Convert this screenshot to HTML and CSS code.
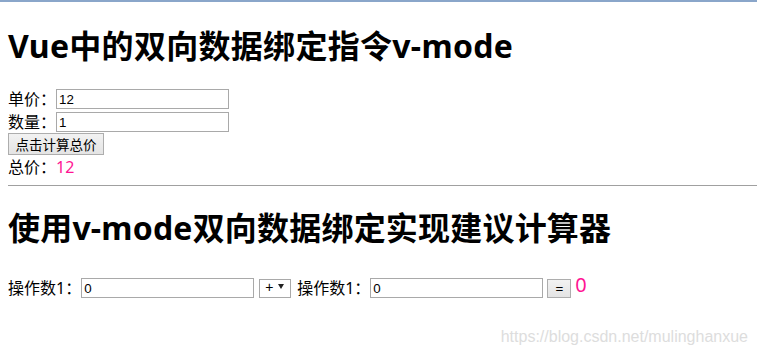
FILE: index.html
```html
<!DOCTYPE html>
<html lang="zh-CN">
<head>
<meta charset="utf-8">
<title>Vue中的双向数据绑定指令v-mode</title>
<link rel="stylesheet" href="styles.css">
</head>
<body>
<div id="app">
  <h1 class="title">Vue中的双向数据绑定指令v-mode</h1>
  <div class="form">
    <div class="row row-first"><span class="label">单价：</span><input class="field" type="text" value="12"></div>
    <div class="row row-second"><span class="label">数量：</span><input class="field" type="text" value="1"></div>
    <button class="btn btn-calc" type="button">点击计算总价</button>
    <div class="total"><span class="label">总价：</span><span class="result">12</span></div>
  </div>
  <hr class="divider">
  <h2 class="title title-second">使用v-mode双向数据绑定实现建议计算器</h2>
  <div class="calc">
    <span class="label">操作数1：</span>
    <input class="field" type="text" value="0">
    <span class="sel-wrap">
      <select class="op"><option>+</option><option>-</option><option>*</option><option>/</option></select>
      <svg class="caret" width="6" height="5" viewBox="0 0 6 5"><path d="M0 0H6L3 5Z" fill="#222"/></svg>
    </span>
    <span class="label label-second">操作数1：</span>
    <input class="field" type="text" value="0">
    <button class="btn btn-eq" type="button">=</button>
    <span class="result result-big">0</span>
  </div>
</div>
<div class="watermark">https://blog.csdn.net/mulinghanxue</div>
</body>
</html>
```

FILE: styles.css
```css
html, body {
  background: #fff;
}
body {
  margin: 0;
  padding: 0 0 0 8px;
  border-top: 2px solid #8aa6ca;
  font-family: "Noto Sans", "Noto Sans CJK SC", sans-serif;
  font-size: 16px;
  color: #000;
  min-height: 354px;
  box-sizing: border-box;
}
.title {
  font-size: 32px;
  font-weight: bold;
  line-height: 40px;
  margin: 24px 0 23px;
  white-space: nowrap;
  letter-spacing: 0.3px;
}
.title-second {
  margin: 22px 0 30px;
  letter-spacing: 0.2px;
}
.form {
  display: flex;
  flex-direction: column;
  align-items: flex-start;
}
.row {
  display: flex;
  align-items: center;
  height: 20px;
}
.row-first { margin-bottom: 3px; }
.row-second { margin-bottom: 1px; }
.label {
  line-height: 20px;
  white-space: nowrap;
}
.field {
  box-sizing: border-box;
  width: 173px;
  height: 20px;
  margin: 0;
  padding: 0 2px;
  border: 1px solid #a9a9a9;
  font-family: "Liberation Sans", Arial, sans-serif;
  font-size: 13.33px;
  color: #000;
  background: #fff;
  outline: none;
}
.btn {
  box-sizing: border-box;
  margin: 0;
  border: 1px solid #adadad;
  border-radius: 0;
  background: linear-gradient(#f2f2f2, #e4e4e4);
  color: #000;
  font-family: "Noto Sans CJK SC", sans-serif;
  font-size: 13.5px;
  line-height: 18px;
  cursor: pointer;
}
.btn-calc {
  height: 22px;
  width: 96px;
  padding: 0;
}
.total {
  line-height: 24px;
  height: 24px;
  display: flex;
  align-items: center;
}
.result {
  color: #ff1493;
  font-size: 16px;
}
.divider {
  margin: 6px 0 0;
  border: 0;
  border-top: 1px solid #a0a0a0;
  height: 0;
}
.calc {
  display: flex;
  align-items: flex-start;
  height: 20px;
}
.calc .label {
  line-height: 20px;
}
.sel-wrap {
  position: relative;
  display: block;
  margin: 1px 0 0 5px;
  height: 19px;
}
.op {
  appearance: none;
  -webkit-appearance: none;
  box-sizing: border-box;
  display: block;
  width: 32px;
  height: 19px;
  margin: 0;
  padding: 0 0 2px 5px;
  border: 1px solid #a9a9a9;
  border-radius: 0;
  background: #fff;
  font-family: "Liberation Sans", Arial, sans-serif;
  font-size: 14px;
  line-height: 15px;
  color: #000;
}
.caret {
  position: absolute;
  left: 19px;
  top: 5px;
}
.label-second {
  margin-left: 6px;
}
.btn-eq {
  margin: 1px 0 0 4px;
  width: 24px;
  height: 19px;
  padding: 0;
  font-family: "Liberation Sans", Arial, sans-serif;
  font-size: 13.33px;
  line-height: 17px;
}
.result-big {
  margin-left: 4px;
  font-size: 20px;
  line-height: 20px;
  margin-top: -3px;
}
.watermark {
  position: absolute;
  right: 9px;
  bottom: 11px;
  font-family: "Liberation Sans", Arial, sans-serif;
  font-size: 16px;
  line-height: 16px;
  color: #dddddd;
}
```
